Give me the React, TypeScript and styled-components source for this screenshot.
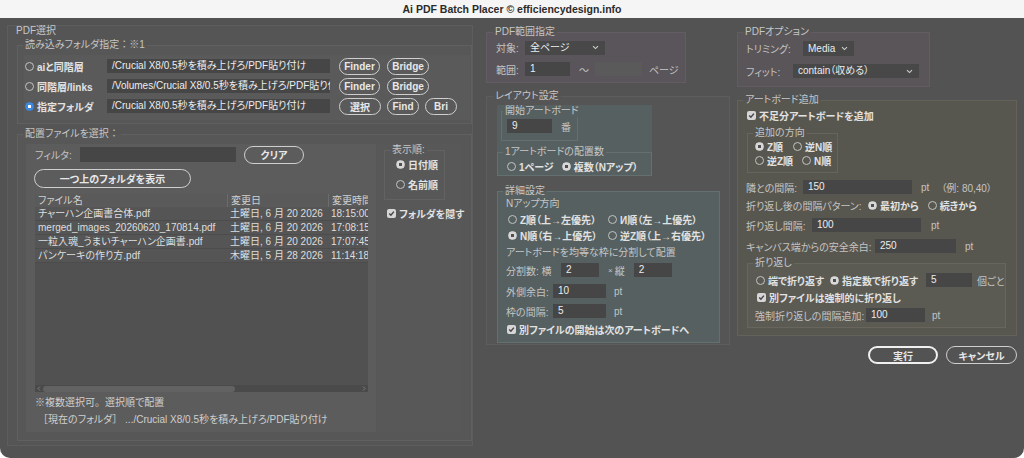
import React from "react";
import styled, { createGlobalStyle } from "styled-components";

const GlobalStyle = createGlobalStyle`
  html, body {
    margin: 0;
    padding: 0;
    background: #ffffff;
  }
  body {
    font-family: "Liberation Sans", "Noto Sans CJK JP", sans-serif;
    font-size: 10px;
    font-feature-settings: "palt";
    color: #c6c6c6;
  }
  * {
    box-sizing: border-box;
  }
`;

const Window = styled.div`
  width: 1024px;
  height: 458px;
  display: flex;
  flex-direction: column;
  background: #535353;
  border-radius: 0 0 10px 10px;
  overflow: hidden;
`;

const TitleBar = styled.div`
  height: 18px;
  flex: none;
  background: #f5f5f5;
  color: #2b2b2b;
  font-weight: 700;
  font-size: 10.5px;
  display: flex;
  align-items: center;
  justify-content: center;
`;

const Body = styled.div`
  flex: 1;
  display: flex;
  align-items: flex-start;
  padding: 7px 0 0 7px;
`;

const MainPanel = styled.section`
  width: 466px;
  height: 421px;
  border: 1px solid #5d5d5d;
  background: #555555;
  padding-left: 9px;
  display: flex;
  flex-direction: column;
`;

const PanelTitle = styled.div`
  height: 12px;
  line-height: 12px;
  margin: -1px 0 0 -1px;
  color: #c8c8c8;
`;

const Column = styled.div<{ $w: number; $ml: number }>`
  width: ${(p) => p.$w}px;
  margin-left: ${(p) => p.$ml}px;
  padding-top: 1px;
  display: flex;
  flex-direction: column;
`;

const Group = styled.fieldset<{
  $w: number;
  $bg?: string;
  $line?: string;
  $pad: string;
  $mt?: number;
  $ml?: number;
}>`
  margin: ${(p) => p.$mt ?? 0}px 0 0 ${(p) => p.$ml ?? 0}px;
  min-width: 0;
  width: ${(p) => p.$w}px;
  flex: none;
  border: 1px solid ${(p) => p.$line ?? "#606060"};
  background: ${(p) => p.$bg ?? "transparent"};
  padding: ${(p) => p.$pad};
`;

const Caption = styled.legend<{ $ml: number }>`
  padding: 0 2px;
  margin-left: ${(p) => p.$ml}px;
  line-height: 12px;
  color: #c6c6c6;
  white-space: nowrap;
`;

const Line = styled.div<{ $h?: number; $mt?: number; $ml?: number }>`
  display: flex;
  align-items: center;
  height: ${(p) => p.$h ?? 14}px;
  margin-top: ${(p) => p.$mt ?? 0}px;
  margin-left: ${(p) => p.$ml ?? 0}px;
  white-space: nowrap;
`;

const Label = styled.span<{ $w?: number; $ml?: number }>`
  flex: none;
  width: ${(p) => (p.$w ? `${p.$w}px` : "auto")};
  margin-left: ${(p) => p.$ml ?? 0}px;
  color: #c4c4c4;
  white-space: nowrap;
`;

const Times = styled(Label)`
  font-size: 8px;
`;

/* colons, square brackets and full stops keep their full width under palt */
const Wide = styled.span`
  font-feature-settings: normal;
`;

const PUNCT = /([：［］。、])/;

const jp = (s: string) =>
  s.split(PUNCT).map((part, i) => (PUNCT.test(part) ? <Wide key={i}>{part}</Wide> : part));

const TextBox = styled.div<{ $w: number; $h?: number; $off?: boolean; $ml?: number }>`
  flex: none;
  width: ${(p) => p.$w}px;
  height: ${(p) => p.$h ?? 14}px;
  line-height: ${(p) => p.$h ?? 14}px;
  margin-left: ${(p) => p.$ml ?? 0}px;
  padding: 0 5px;
  background: ${(p) => (p.$off ? "#5a5a5a" : "#464646")};
  color: #ededed;
  overflow: hidden;
  white-space: nowrap;
`;

const SelectBox = styled(TextBox)`
  display: flex;
  align-items: center;
  justify-content: space-between;
  padding-right: 6px;
  background: #484848;
`;

const PillButton = styled.button<{ $w: number; $h?: number; $primary?: boolean; $ml?: number }>`
  flex: none;
  width: ${(p) => p.$w}px;
  height: ${(p) => p.$h ?? 17}px;
  margin-left: ${(p) => p.$ml ?? 0}px;
  padding: 0;
  border-radius: 10px;
  border: ${(p) => (p.$primary ? "2px solid #f0f0f0" : "1.5px solid #cfcfcf")};
  background: transparent;
  color: #e8e8e8;
  font-family: inherit;
  font-size: 10px;
  font-weight: 700;
  font-feature-settings: "palt";
  display: flex;
  align-items: center;
  justify-content: center;
  white-space: nowrap;
`;

const Choice = styled.label<{ $ml?: number }>`
  display: inline-flex;
  align-items: center;
  gap: 3px;
  margin-left: ${(p) => p.$ml ?? 0}px;
  color: #e2e2e2;
  font-weight: 700;
  white-space: nowrap;
  flex: none;
`;

const RadioDot = styled.span<{ $on?: boolean; $accent?: boolean }>`
  flex: none;
  width: 9px;
  height: 9px;
  border-radius: 50%;
  border: 1px solid
    ${(p) => (p.$on ? (p.$accent ? "#3b8ae0" : "#d8d8d8") : "#c2c2c2")};
  background: ${(p) =>
    p.$on
      ? p.$accent
        ? "radial-gradient(circle, #ffffff 0 1.4px, #3b8ae0 1.9px)"
        : "radial-gradient(circle, #4e4e4e 0 1.4px, #d8d8d8 1.9px)"
      : "transparent"};
`;

const CheckSquare = styled.span`
  flex: none;
  width: 9px;
  height: 9px;
  border-radius: 2px;
  background: #d6d6d6;
  display: flex;
  align-items: center;
  justify-content: center;
`;

/* left column parts */

const RowsBox = styled.div`
  background: #5a5a5a;
  height: 65px;
  padding: 1px 0 0 1px;
`;

const SourceRow = styled.div`
  display: flex;
  align-items: center;
  height: 20px;
`;

const ChoiceCell = styled.div<{ $w: number }>`
  width: ${(p) => p.$w}px;
  flex: none;
  display: flex;
`;

const FilesBody = styled.div`
  display: flex;
  height: 288px;
`;

const FilePane = styled.div`
  width: 350px;
  flex: none;
  background: #5c5c5c;
  padding: 1px 0 0 8px;
  display: flex;
  flex-direction: column;
`;

const SidePane = styled.div`
  width: 85px;
  flex: none;
  margin-left: 1px;
  background: #585858;
  padding-left: 7px;
  display: flex;
  flex-direction: column;
`;

const FileList = styled.div`
  width: 333px;
  height: 198px;
  margin: 6px 0 0 1px;
  background: #515151;
  display: flex;
  flex-direction: column;
`;

const ListHead = styled.div`
  display: grid;
  grid-template-columns: 192px 101px 40px;
  height: 13px;
  flex: none;
  background: #5a5a5a;
  color: #d0d0d0;
`;

const HeadCell = styled.div<{ $first?: boolean }>`
  padding-left: 3px;
  line-height: 13px;
  border-left: ${(p) => (p.$first ? "none" : "1px solid #6c6c6c")};
  overflow: hidden;
  white-space: nowrap;
`;

const ListRow = styled.div`
  display: grid;
  grid-template-columns: 192px 101px 40px;
  height: 14px;
  flex: none;
  background: #555555;
  border-bottom: 1px solid #4c4c4c;
  color: #dedede;
`;

const Cell = styled.div`
  padding-left: 3px;
  line-height: 13px;
  overflow: hidden;
  white-space: nowrap;
`;

const ListSpace = styled.div`
  flex: 1;
`;

const HScroll = styled.div`
  height: 7px;
  flex: none;
  background: #4a4a4a;
  display: flex;
  align-items: center;
  padding: 0 2px;
`;

const ScrollThumb = styled.div`
  width: 192px;
  height: 6px;
  margin-left: 2px;
  border-radius: 3px;
  background: #626262;
`;

const Note = styled.div<{ $mt: number; $pl: number }>`
  margin-top: ${(p) => p.$mt}px;
  padding-left: ${(p) => p.$pl}px;
  line-height: 14px;
  color: #cfcfcf;
  white-space: nowrap;
`;

/* middle column parts */

const TealBox = styled.div`
  width: 155px;
  background: #576060;
  padding-left: 4px;
  display: flex;
  flex-direction: column;
`;

const Plain = styled.div<{ $mt?: number }>`
  line-height: 14px;
  margin-top: ${(p) => p.$mt ?? 0}px;
  color: #c6c6c6;
  white-space: nowrap;
`;

const ButtonBar = styled.div`
  display: flex;
  justify-content: flex-end;
  gap: 8px;
  margin-top: 10px;
`;

const Chevron = () => (
  <svg width="7" height="5" viewBox="0 0 7 5">
    <path d="M1 1.2 L3.5 3.6 L6 1.2" fill="none" stroke="#d0d0d0" strokeWidth="1.1" />
  </svg>
);

const Tick = () => (
  <svg width="7" height="7" viewBox="0 0 7 7">
    <path d="M1.2 3.6 L2.9 5.3 L5.9 1.6" fill="none" stroke="#444" strokeWidth="1.4" />
  </svg>
);

const Arrow = ({ right }: { right?: boolean }) => (
  <svg width="4" height="5" viewBox="0 0 4 5">
    <path
      d={right ? "M1 0.5 L3 2.5 L1 4.5" : "M3 0.5 L1 2.5 L3 4.5"}
      fill="none"
      stroke="#8a8a8a"
      strokeWidth="0.8"
    />
  </svg>
);

const Radio = ({
  on,
  accent,
  children,
  ml,
}: {
  on?: boolean;
  accent?: boolean;
  children: React.ReactNode;
  ml?: number;
}) => (
  <Choice $ml={ml}>
    <RadioDot $on={on} $accent={accent} />
    {children}
  </Choice>
);

const Check = ({ children, ml }: { children: React.ReactNode; ml?: number }) => (
  <Choice $ml={ml}>
    <CheckSquare>
      <Tick />
    </CheckSquare>
    {children}
  </Choice>
);

const files = [
  ["チャーハン企画書合体.pdf", "土曜日, 6 月 20 2026", "18:15:00"],
  ["merged_images_20260620_170814.pdf", "土曜日, 6 月 20 2026", "17:08:15"],
  ["一粒入魂_うまいチャーハン企画書.pdf", "土曜日, 6 月 20 2026", "17:07:45"],
  ["パンケーキの作り方.pdf", "木曜日, 5 月 28 2026", "11:14:18"],
];

export default function App() {
  return (
    <>
      <GlobalStyle />
      <Window>
        <TitleBar>Ai PDF Batch Placer © efficiencydesign.info</TitleBar>
        <Body>
          <MainPanel>
            <PanelTitle>PDF選択</PanelTitle>
            <Group $w={455} $mt={2} $line="#606060" $bg="#575757" $pad="4px 1px 3px 6px">
              <Caption $ml={-1}>{jp("読み込みフォルダ指定：※1")}</Caption>
              <RowsBox>
                <SourceRow>
                  <ChoiceCell $w={82}>
                    <Radio>aiと同階層</Radio>
                  </ChoiceCell>
                  <TextBox $w={223}>/Crucial X8/0.5秒を積み上げろ/PDF貼り付け</TextBox>
                  <PillButton $w={41} $ml={9}>Finder</PillButton>
                  <PillButton $w={42} $ml={7}>Bridge</PillButton>
                </SourceRow>
                <SourceRow>
                  <ChoiceCell $w={82}>
                    <Radio>同階層/links</Radio>
                  </ChoiceCell>
                  <TextBox $w={223}>/Volumes/Crucial X8/0.5秒を積み上げろ/PDF貼り付け</TextBox>
                  <PillButton $w={41} $ml={9}>Finder</PillButton>
                  <PillButton $w={42} $ml={7}>Bridge</PillButton>
                </SourceRow>
                <SourceRow>
                  <ChoiceCell $w={82}>
                    <Radio on accent>指定フォルダ</Radio>
                  </ChoiceCell>
                  <TextBox $w={223}>/Crucial X8/0.5秒を積み上げろ/PDF貼り付け</TextBox>
                  <PillButton $w={42} $ml={9}>選択</PillButton>
                  <PillButton $w={32} $ml={6}>Find</PillButton>
                  <PillButton $w={32} $ml={6}>Bri</PillButton>
                </SourceRow>
              </RowsBox>
            </Group>

            <Group $w={455} $mt={4} $line="#606060" $bg="#575757" $pad="4px 0 8px 8px">
              <Caption $ml={-3}>{jp("配置ファイルを選択：")}</Caption>
              <FilesBody>
                <FilePane>
                  <Line $h={19}>
                    <Label $w={45} $ml={1}>フィルタ:</Label>
                    <TextBox $w={156} $h={15} />
                    <PillButton $w={60} $h={18} $ml={8}>クリア</PillButton>
                  </Line>
                  <Line $h={19} $mt={5}>
                    <PillButton $w={157} $h={19}>一つ上のフォルダを表示</PillButton>
                  </Line>
                  <FileList>
                    <ListHead>
                      <HeadCell $first>ファイル名</HeadCell>
                      <HeadCell>変更日</HeadCell>
                      <HeadCell>変更時間</HeadCell>
                    </ListHead>
                    {files.map((f) => (
                      <ListRow key={f[0]}>
                        <Cell>{f[0]}</Cell>
                        <Cell>{f[1]}</Cell>
                        <Cell>{f[2]}</Cell>
                      </ListRow>
                    ))}
                    <ListSpace />
                    <HScroll>
                      <Arrow />
                      <ScrollThumb />
                      <ListSpace />
                      <Arrow right />
                    </HScroll>
                  </FileList>
                  <Note $mt={4} $pl={1}>{jp("※複数選択可。選択順で配置")}</Note>
                  <Note $mt={3} $pl={4}>
                    {jp("［現在のフォルダ］ .../Crucial X8/0.5秒を積み上げろ/PDF貼り付け")}
                  </Note>
                </FilePane>
                <SidePane>
                  <Group $w={61} $line="#626262" $pad="0 0 7px 11px">
                    <Caption $ml={-6}>表示順:</Caption>
                    <Line $h={16}>
                      <Radio on>日付順</Radio>
                    </Line>
                    <Line $h={16} $mt={4}>
                      <Radio>名前順</Radio>
                    </Line>
                  </Group>
                  <Line $mt={6} $ml={3}>
                    <Check>フォルダを隠す</Check>
                  </Line>
                </SidePane>
              </FilesBody>
            </Group>
          </MainPanel>

          <Column $w={244} $ml={13}>
            <Group $w={200} $bg="#5a555a" $line="#635d63" $pad="2px 0 5px 9px">
              <Caption $ml={-3}>PDF範囲指定</Caption>
              <Line $h={15}>
                <Label $w={29}>対象:</Label>
                <SelectBox $w={80}>
                  全ページ
                  <Chevron />
                </SelectBox>
              </Line>
              <Line $h={16} $mt={6}>
                <Label $w={29}>範囲:</Label>
                <TextBox $w={45}>1</TextBox>
                <Label $w={25}>
                  <span style={{ paddingLeft: 9 }}>〜</span>
                </Label>
                <TextBox $w={47} $off />
                <Label $ml={7}>ページ</Label>
              </Line>
            </Group>

            <Group $w={244} $mt={7} $line="#5d5d5d" $bg="#555555" $pad="3px 0 1px 10px">
              <Caption $ml={-4}>レイアウト設定</Caption>
              <TealBox>
                <Group $w={77} $line="#647070" $pad="2px 0 7px 5px">
                  <Caption $ml={-4}>開始アートボード</Caption>
                  <Line>
                    <TextBox $w={45}>9</TextBox>
                    <Label $ml={9}>番</Label>
                  </Line>
                </Group>
                <Group $w={155} $ml={-4} $mt={5} $line="#647070" $pad="1px 0 2px 9px">
                  <Caption $ml={-4}>1アートボードの配置数</Caption>
                  <Line>
                    <Radio>1ページ</Radio>
                    <Radio on ml={8}>
                      複数（Nアップ）
                    </Radio>
                  </Line>
                </Group>
              </TealBox>

              <Group $w={223} $mt={9} $bg="#566060" $line="#627070" $pad="0 0 6px 8px">
                <Caption $ml={-3}>詳細設定</Caption>
                <Plain>Nアップ方向</Plain>
                <Line $h={15} $mt={1} $ml={2}>
                  <ChoiceCell $w={100}>
                    <Radio>Z順（上→左優先）</Radio>
                  </ChoiceCell>
                  <Radio>И順（左→上優先）</Radio>
                </Line>
                <Line $h={15} $mt={1} $ml={2}>
                  <ChoiceCell $w={100}>
                    <Radio on>N順（右→上優先）</Radio>
                  </ChoiceCell>
                  <Radio>逆Z順（上→右優先）</Radio>
                </Line>
                <Plain $mt={3}>アートボードを均等な枠に分割して配置</Plain>
                <Line $mt={3}>
                  <Label $w={55}>分割数: 横</Label>
                  <TextBox $w={38}>2</TextBox>
                  <Times $ml={9}>×</Times>
                  <Label $ml={2}>縦</Label>
                  <TextBox $w={38} $ml={9}>2</TextBox>
                </Line>
                <Line $mt={7}>
                  <Label $w={47}>外側余白:</Label>
                  <TextBox $w={53}>10</TextBox>
                  <Label $ml={8}>pt</Label>
                </Line>
                <Line $mt={6}>
                  <Label $w={47}>枠の間隔:</Label>
                  <TextBox $w={53}>5</TextBox>
                  <Label $ml={8}>pt</Label>
                </Line>
                <Line $mt={4} $ml={1}>
                  <Check>別ファイルの開始は次のアートボードへ</Check>
                </Line>
              </Group>
            </Group>
          </Column>

          <Column $w={280} $ml={7}>
            <Group $w={193} $bg="#5a5559" $line="#635d62" $pad="3px 0 8px 8px">
              <Caption $ml={-3}>PDFオプション</Caption>
              <Line $h={15}>
                <Label $w={57}>トリミング:</Label>
                <SelectBox $w={51} $h={15}>
                  Media
                  <Chevron />
                </SelectBox>
              </Line>
              <Line $mt={8}>
                <Label $w={47}>フィット:</Label>
                <SelectBox $w={126}>
                  contain（収める）
                  <Chevron />
                </SelectBox>
              </Line>
            </Group>

            <Group $w={280} $mt={7} $bg="#58574f" $line="#636158" $pad="2px 0 7px 8px">
              <Caption $ml={-3}>アートボード追加</Caption>
              <Line $ml={1}>
                <Check>不足分アートボードを追加</Check>
              </Line>
              <Group $w={91} $mt={5} $ml={1} $line="#66645b" $pad="0 0 5px 7px">
                <Caption $ml={-2}>追加の方向</Caption>
                <Line>
                  <Radio on>Z順</Radio>
                  <Radio ml={10}>逆N順</Radio>
                </Line>
                <Line>
                  <Radio>逆Z順</Radio>
                  <Radio ml={9}>N順</Radio>
                </Line>
              </Group>
              <Line $mt={7}>
                <Label $w={57}>隣との間隔:</Label>
                <TextBox $w={109}>150</TextBox>
                <Label $ml={9}>pt</Label>
                <Label $ml={12}>（例: 80,40）</Label>
              </Line>
              <Line $mt={4}>
                <Label $w={122}>折り返し後の間隔パターン:</Label>
                <Radio on>最初から</Radio>
                <Radio ml={9}>続きから</Radio>
              </Line>
              <Line $mt={6}>
                <Label $w={66}>折り返し間隔:</Label>
                <TextBox $w={109}>100</TextBox>
                <Label $ml={10}>pt</Label>
              </Line>
              <Line $mt={7}>
                <Label $w={129}>キャンバス端からの安全余白:</Label>
                <TextBox $w={81}>250</TextBox>
                <Label $ml={9}>pt</Label>
              </Line>
              <Group $w={259} $mt={4} $ml={1} $bg="#5b5a53" $line="#67655c" $pad="4px 0 5px 8px">
                <Caption $ml={-3}>折り返し</Caption>
                <Line>
                  <Radio>端で折り返す</Radio>
                  <Radio on ml={6}>
                    指定数で折り返す
                  </Radio>
                  <TextBox $w={46} $ml={8}>5</TextBox>
                  <Label $ml={5}>個ごと</Label>
                </Line>
                <Line $mt={3} $ml={1}>
                  <Check>別ファイルは強制的に折り返し</Check>
                </Line>
                <Line $mt={4}>
                  <Label $w={111} $ml={-1}>強制折り返しの間隔追加:</Label>
                  <TextBox $w={59}>100</TextBox>
                  <Label $ml={7}>pt</Label>
                </Line>
              </Group>
            </Group>

            <ButtonBar>
              <PillButton $w={70} $h={18} $primary>実行</PillButton>
              <PillButton $w={71} $h={18}>キャンセル</PillButton>
            </ButtonBar>
          </Column>
        </Body>
      </Window>
    </>
  );
}
